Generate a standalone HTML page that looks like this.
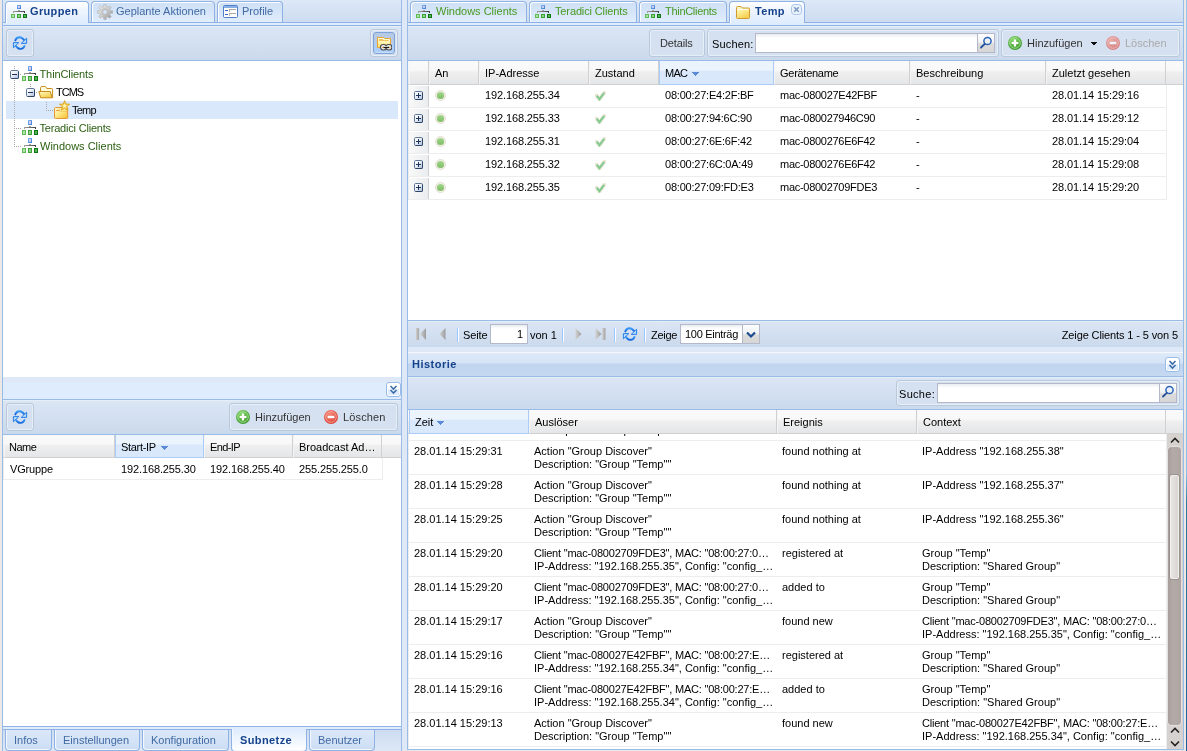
<!DOCTYPE html>
<html lang="de">
<head>
<meta charset="utf-8">
<title>ThinClient Management</title>
<style>
*{box-sizing:border-box;margin:0;padding:0}
html,body{width:1187px;height:751px;overflow:hidden}
body{background:#ebe8e5;font:11px "Liberation Sans",Arial,sans-serif;color:#000;position:relative}
.abs{position:absolute}
svg{display:block}
#edgeR{left:1186px;top:0;width:1px;height:751px;background:linear-gradient(#94c8ec 0,#86c0e8 63%,#2f7b9b 67%,#2a729a 85%,#1f5c94 100%)}
#gap{left:402px;top:0;width:5px;height:750px;background:#dfe8f6}
.panel{will-change:transform;border:1px solid #99bbe8;border-top:0;background:#fff;overflow:hidden}
#left{left:2px;top:0;width:400px;height:752px}
#right{left:407px;top:0;width:777px;height:750px}
.strip{left:0;top:0;right:0;height:23px;background:linear-gradient(#dde8f7,#cddcf1);border-bottom:1px solid #8db2e3}
.spacer{left:0;right:0;height:3px;background:#deecfd;border-bottom:1px solid #8db2e3}
.tab{position:absolute;top:1px;height:21px;border:1px solid #8db2e3;border-bottom:0;border-radius:4px 4px 0 0;background:linear-gradient(#cfe0f6 0,#d6e5f9 50%,#e0edfc 100%);color:#416aa3;white-space:nowrap;box-shadow:inset 1px 1px 0 #fff}
.tab.on{height:22px;letter-spacing:.35px;background:linear-gradient(#ffffff 0,#eef5fe 40%,#deecfd 100%);color:#15428b;font-weight:bold;box-shadow:inset 1px 1px 0 #fff}
.tab .t{position:absolute;top:3px;line-height:13px}
.tab .i{position:absolute;top:2px;left:5px;width:16px;height:16px}
.tab.g{color:#4a9a22}
.bstrip{left:0;right:0;top:730px;height:21px;background:linear-gradient(#cddcf1,#dde8f7)}
.btab{position:absolute;top:0;height:21px;border:1px solid #8db2e3;border-top:0;border-radius:0 0 4px 4px;background:linear-gradient(#dbe8f9 0,#d3e2f6 60%,#cbdcf3 100%);color:#416aa3;box-shadow:inset 1px -1px 0 #f3f8fe}
.btab.on{letter-spacing:.4px;top:-1px;height:23px;background:linear-gradient(#deecfd,#fff);color:#15428b;font-weight:bold}
.btab .t{position:absolute;top:4px;left:8px;line-height:13px;white-space:nowrap}
.btab.on .t{top:5px}
.tb{left:0;right:0;background:linear-gradient(#f1f5fb 0,#dbe6f4 1px,#d3e0f1 50%,#cad9ec 100%);border-bottom:1px solid #99bbe8}
.grp{position:absolute;border:1px solid #b9c8db;border-radius:3px;background:#d5e1f1;box-shadow:inset 0 0 0 1px #e6eef8}
.lbl{position:absolute;line-height:13px;white-space:nowrap}
.inp{position:absolute;background:#fff linear-gradient(#e9edf1 0,#fff 4px);border:1px solid #b5b8c8}
.trg{position:absolute;width:17px;background:linear-gradient(#fdfdfe 0,#f1f3f6 45%,#dcdcdc 55%,#d6d6d6 100%);border:1px solid #b5b8c8;border-left:0}
.gh{left:0;right:0;background:linear-gradient(#fafafa 0,#f8f8f8 40%,#efefef 48%,#e5e6e8 100%);border-bottom:1px solid #d0d0d0}
.hc{position:absolute;top:0;bottom:-1px;border-left:1px solid #f4f4f4;border-right:1px solid #d0d0d0;border-bottom:1px solid #d0d0d0;padding:5px 3px 0 5px;line-height:15px;white-space:nowrap;overflow:hidden}
.hc.s{background:linear-gradient(#ebf3fd 0,#ebf3fd 40%,#d9e8fb 45%,#d9e8fb 100%);border-color:#aaccf6}
.sa{display:inline-block;margin:0 0 1px 5px;vertical-align:middle}
.row{position:absolute;left:0;border:1px solid #ededed;border-top:0;background:#fff}
.c{position:absolute;top:0;line-height:13px;white-space:nowrap;overflow:hidden}
.pbtn{position:absolute;border:1px solid #7ea1d8;border-radius:3px;background:linear-gradient(#b5c9e4 0,#b7cce7 56%,#a9cdf7 57%,#aed0f7 92%,#d4e6fb 100%)}
i.n{font-style:normal;letter-spacing:-.21px}

</style>
</head>
<body>
<div class="abs" id="gap"></div>
<div class="abs" id="edgeR"></div>

<!-- LEFT PANEL -->
<div class="abs panel" id="left">
  <div class="abs strip" id="ltabs">
    <div class="tab on" style="left:2px;width:84px"><span class="i"><svg width="16" height="16" viewBox="0 0 16 16" ><defs><linearGradient id="nb28" x1="0" y1="0" x2="1" y2="1"><stop offset="0" stop-color="#86b6f0"/><stop offset="1" stop-color="#3c7ad2"/></linearGradient>
<linearGradient id="nl28" x1="0" y1="0" x2="1" y2="0"><stop offset="0" stop-color="#a2a2a2"/><stop offset="1" stop-color="#3f3f3f"/></linearGradient></defs>
<g shape-rendering="crispEdges">
<rect x="6" y="1" width="4" height="4" fill="url(#nb28)"/><rect x="7" y="2" width="2" height="2" fill="#cdcbee"/>
<rect x="7" y="6" width="2" height="1" fill="#a3a3a3"/>
<rect x="2" y="7" width="12" height="1" fill="url(#nl28)"/><rect x="2" y="8" width="1" height="1" fill="#a0a0a0"/><rect x="13" y="8" width="1" height="1" fill="#3a3a3a"/>
<rect x="0" y="10" width="4" height="4" fill="#5dbd52"/><rect x="1" y="11" width="2" height="2" fill="#b4e0ae"/>
<rect x="6" y="10" width="4" height="4" fill="#3aa432"/><rect x="7" y="11" width="2" height="2" fill="#8fd18a"/>
<rect x="12" y="10" width="4" height="4" fill="#0c7710"/><rect x="13" y="11" width="2" height="2" fill="#56b257"/>
</g></svg></span><span class="t" style="left:24px">Gruppen</span></div>
    <div class="tab" style="left:88px;width:124px"><span class="i"><svg width="16" height="16" viewBox="0 0 16 16" ><defs><linearGradient id="gg32" x1="0" y1="0" x2="1" y2="1"><stop offset="0" stop-color="#ededed"/><stop offset=".5" stop-color="#cfcfcf"/><stop offset="1" stop-color="#8d8d8d"/></linearGradient></defs>
<path d="M6.61 2.78L6.77 0.40L9.23 0.40L9.39 2.78L10.71 3.33L12.51 1.76L14.24 3.49L12.67 5.29L13.22 6.61L15.60 6.77L15.60 9.23L13.22 9.39L12.67 10.71L14.24 12.51L12.51 14.24L10.71 12.67L9.39 13.22L9.23 15.60L6.77 15.60L6.61 13.22L5.29 12.67L3.49 14.24L1.76 12.51L3.33 10.71L2.78 9.39L0.40 9.23L0.40 6.77L2.78 6.61L3.33 5.29L1.76 3.49L3.49 1.76L5.29 3.33ZM5.70 8a2.3 2.3 0 1 0 4.6 0a2.3 2.3 0 1 0 -4.6 0Z" fill="url(#gg32)" fill-rule="evenodd" stroke="#a7a7a7" stroke-width=".5" stroke-linejoin="round"/>
<circle cx="8" cy="8" r="3.300" fill="none" stroke="#b9b9b9" stroke-width=".8"/></svg></span><span class="t" style="left:24px">Geplante Aktionen</span></div>
    <div class="tab" style="left:214px;width:66px"><span class="i"><svg width="16" height="16" viewBox="0 0 16 16" ><rect x=".5" y="1.5" width="14" height="12" rx="1" fill="#fffdf8" stroke="#4f7fc7"/>
<rect x="1" y="2" width="13" height="2" fill="#86b0e6"/>
<g shape-rendering="crispEdges"><rect x="2" y="6" width="3" height="1" fill="#3b63d6"/><rect x="2" y="10" width="3" height="1" fill="#3b63d6"/>
<rect x="6" y="5" width="7" height="1" fill="#a9a9a9"/><rect x="6" y="6" width="1" height="2" fill="#b9b9b9"/>
<rect x="6" y="9" width="7" height="1" fill="#a9a9a9"/><rect x="6" y="10" width="1" height="2" fill="#b9b9b9"/></g></svg></span><span class="t" style="left:24px">Profile</span></div>
  </div>
  <div class="abs spacer" style="top:23px"></div>
  <div class="abs tb" style="top:26px;height:35px" id="ltb1">
    <div class="grp" style="left:3px;top:3px;width:28px;height:28px"><span class="abs" style="left:5px;top:5px"><svg width="16" height="16" viewBox="0 0 16 16" ><defs><linearGradient id="rg34" x1="0" y1="0" x2="0" y2="1"><stop offset="0" stop-color="#3a9cf6"/><stop offset="1" stop-color="#1668dc"/></linearGradient></defs>
<path d="M3.300 5.400C4.600 1.700 9.400.700 12.300 5.300" fill="none" stroke="url(#rg34)" stroke-width="1.900" stroke-linecap="round"/>
<path d="M14.600 3.200v5.200H9.200z" fill="#b4dbfc" stroke="#2a7fe6" stroke-width="1" stroke-linejoin="round"/>
<path d="M12.500 10.900C11.200 14.500 6.600 15.300 3.800 10.700" fill="none" stroke="url(#rg34)" stroke-width="1.900" stroke-linecap="round"/>
<path d="M1.400 12.800V7.600h5.400z" fill="#b4dbfc" stroke="#2a7fe6" stroke-width="1" stroke-linejoin="round"/></svg></span></div>
    <div class="grp" style="left:367px;top:3px;width:28px;height:28px"><div class="pbtn" style="left:2px;top:2px;width:22px;height:22px"><span class="abs" style="left:2px;top:2px"><svg width="16" height="16" viewBox="0 0 16 16" ><defs><linearGradient id="fl37" x1="0" y1="0" x2="0" y2="1"><stop offset="0" stop-color="#fffbe2"/><stop offset=".5" stop-color="#fff3b0"/><stop offset="1" stop-color="#f9d860"/></linearGradient></defs>
<path d="M1.500 12.500V2.500h6l1 1h6v9z" fill="url(#fl37)" stroke="#e8a631"/>
<path d="M3 4.500h4M3 5.500h9.500" stroke="#f3c45e"/>
<rect x="4.500" y="9.500" width="6" height="5.500" rx="2.700" fill="#ececec" stroke="#4c4c4c" stroke-width="1.100"/>
<rect x="9.900" y="9.500" width="6" height="5.500" rx="2.700" fill="#ececec" stroke="#4c4c4c" stroke-width="1.100"/>
<rect x="7.400" y="11.600" width="5.700" height="1.500" fill="#161616"/>
<rect x="7.900" y="11.200" width="4.700" height=".7" fill="#f6f6f6"/>
<rect x="6.100" y="11.800" width="1.100" height="1.100" fill="#f39a1f"/><rect x="13.300" y="11.800" width="1.100" height="1.100" fill="#f39a1f"/></svg></span></div></div>
  </div>
  <div class="abs" id="tree" style="left:0;right:0;top:61px;height:316px;background:#fff"><div class="abs" style="left:3px;top:40px;width:392px;height:18px;background:#d9e8fb"></div><svg class="abs" style="left:0;top:0" width="100" height="100" shape-rendering="crispEdges"><g stroke="#a9a9a9" stroke-dasharray="1 1" fill="none"><path d="M11.500 5v81"/><path d="M17 13.500h2"/><path d="M27.500 23v5"/><path d="M33 31.500h2"/><path d="M43.500 41v9"/><path d="M43 49.500h8"/><path d="M11 67.500h8"/><path d="M11 85.500h8"/></g></svg><span class="abs" style="left:7px;top:9px;"><svg width="9" height="9" viewBox="0 0 9 9" ><defs><linearGradient id="mb0" x1="0" y1="0" x2="1" y2="1"><stop offset="0" stop-color="#ffffff"/><stop offset=".4" stop-color="#f0f3fa"/><stop offset="1" stop-color="#a9badb"/></linearGradient></defs>
<rect x=".5" y=".5" width="8" height="8" rx="1.200" fill="url(#mb0)" stroke="#5f7594"/>
<path d="M8.500 1.500v6.300c0 .4-.3.700-.7.700H1.500" fill="none" stroke="#2f4566"/>
<g shape-rendering="crispEdges"><rect x="2" y="4" width="5" height="1" fill="#1d3557"/></g></svg></span><span class="abs" style="left:19px;top:4px;"><svg width="16" height="18" viewBox="0 0 16 16" preserveAspectRatio="none"><defs><linearGradient id="nb1" x1="0" y1="0" x2="1" y2="1"><stop offset="0" stop-color="#86b6f0"/><stop offset="1" stop-color="#3c7ad2"/></linearGradient>
<linearGradient id="nl1" x1="0" y1="0" x2="1" y2="0"><stop offset="0" stop-color="#a2a2a2"/><stop offset="1" stop-color="#3f3f3f"/></linearGradient></defs>
<g shape-rendering="crispEdges">
<rect x="6" y="1" width="4" height="4" fill="url(#nb1)"/><rect x="7" y="2" width="2" height="2" fill="#cdcbee"/>
<rect x="7" y="6" width="2" height="1" fill="#a3a3a3"/>
<rect x="2" y="7" width="12" height="1" fill="url(#nl1)"/><rect x="2" y="8" width="1" height="1" fill="#a0a0a0"/><rect x="13" y="8" width="1" height="1" fill="#3a3a3a"/>
<rect x="0" y="10" width="4" height="4" fill="#5dbd52"/><rect x="1" y="11" width="2" height="2" fill="#b4e0ae"/>
<rect x="6" y="10" width="4" height="4" fill="#3aa432"/><rect x="7" y="11" width="2" height="2" fill="#8fd18a"/>
<rect x="12" y="10" width="4" height="4" fill="#0c7710"/><rect x="13" y="11" width="2" height="2" fill="#56b257"/>
</g></svg></span><span class="abs" style="left:36.5px;top:4px;line-height:18px;white-space:nowrap;color:#2b5f12;letter-spacing:-0.1px;">ThinClients</span><span class="abs" style="left:23px;top:27px;"><svg width="9" height="9" viewBox="0 0 9 9" ><defs><linearGradient id="mb2" x1="0" y1="0" x2="1" y2="1"><stop offset="0" stop-color="#ffffff"/><stop offset=".4" stop-color="#f0f3fa"/><stop offset="1" stop-color="#a9badb"/></linearGradient></defs>
<rect x=".5" y=".5" width="8" height="8" rx="1.200" fill="url(#mb2)" stroke="#5f7594"/>
<path d="M8.500 1.500v6.300c0 .4-.3.700-.7.700H1.500" fill="none" stroke="#2f4566"/>
<g shape-rendering="crispEdges"><rect x="2" y="4" width="5" height="1" fill="#1d3557"/></g></svg></span><span class="abs" style="left:35px;top:22px;"><svg width="16" height="18" viewBox="0 0 16 18" ><defs><linearGradient id="fo3" x1="0" y1="0" x2=".6" y2="1"><stop offset="0" stop-color="#fffbc2"/><stop offset="1" stop-color="#f4cb48"/></linearGradient></defs>
<path d="M2.500 9V5.200c0-1 .6-1.700 1.500-1.700h2.800c.8 0 1.200.4 1.500 1l.5 1h5c.5 0 .8.300.8.800v8.700" fill="#fffbdc" stroke="#c48a1c"/>
<path d="M.8 8.500h11.400l2 6.300H2.700z" fill="url(#fo3)" stroke="#c48a1c" stroke-linejoin="round"/></svg></span><span class="abs" style="left:53px;top:22px;line-height:18px;white-space:nowrap;letter-spacing:-1.0px;">TCMS</span><span class="abs" style="left:51px;top:39px;"><svg width="16" height="19" viewBox="0 0 16 19" ><defs><linearGradient id="fs4" x1="0" y1="0" x2="1" y2="1"><stop offset="0" stop-color="#fff8d0"/><stop offset=".45" stop-color="#fde98a"/><stop offset="1" stop-color="#f3bd2a"/></linearGradient></defs>
<path d="M.5 17.500V8.500c0-.6.400-1 1-1h11.200c.6 0 1 .4 1 1v9c0 .6-.4 1-1 1h-11.200c-.6 0-1-.4-1-1z" fill="url(#fs4)" stroke="#e8953a"/>
<path d="M2 10.500h3.500v-1" stroke="#e2a040" fill="none"/><path d="M6 11.500h7" stroke="#f0c060" opacity=".7"/>
<path d="M10.60 0.50L11.95 4.04L15.74 4.23L12.79 6.61L13.77 10.27L10.60 8.20L7.43 10.27L8.41 6.61L5.46 4.23L9.25 4.04Z" fill="#f6cf45" stroke="#d9a01f" stroke-width=".8" stroke-linejoin="round"/>
<path d="M10.60 3.40L11.31 5.03L13.07 5.20L11.74 6.37L12.13 8.10L10.60 7.20L9.07 8.10L9.46 6.37L8.13 5.20L9.89 5.03Z" fill="#fdf3b8"/></svg></span><span class="abs" style="left:69px;top:40px;line-height:18px;white-space:nowrap;letter-spacing:-0.8px;">Temp</span><span class="abs" style="left:19px;top:58px;"><svg width="16" height="18" viewBox="0 0 16 16" preserveAspectRatio="none"><defs><linearGradient id="nb5" x1="0" y1="0" x2="1" y2="1"><stop offset="0" stop-color="#86b6f0"/><stop offset="1" stop-color="#3c7ad2"/></linearGradient>
<linearGradient id="nl5" x1="0" y1="0" x2="1" y2="0"><stop offset="0" stop-color="#a2a2a2"/><stop offset="1" stop-color="#3f3f3f"/></linearGradient></defs>
<g shape-rendering="crispEdges">
<rect x="6" y="1" width="4" height="4" fill="url(#nb5)"/><rect x="7" y="2" width="2" height="2" fill="#cdcbee"/>
<rect x="7" y="6" width="2" height="1" fill="#a3a3a3"/>
<rect x="2" y="7" width="12" height="1" fill="url(#nl5)"/><rect x="2" y="8" width="1" height="1" fill="#a0a0a0"/><rect x="13" y="8" width="1" height="1" fill="#3a3a3a"/>
<rect x="0" y="10" width="4" height="4" fill="#5dbd52"/><rect x="1" y="11" width="2" height="2" fill="#b4e0ae"/>
<rect x="6" y="10" width="4" height="4" fill="#3aa432"/><rect x="7" y="11" width="2" height="2" fill="#8fd18a"/>
<rect x="12" y="10" width="4" height="4" fill="#0c7710"/><rect x="13" y="11" width="2" height="2" fill="#56b257"/>
</g></svg></span><span class="abs" style="left:36.5px;top:58px;line-height:18px;white-space:nowrap;color:#2b5f12;letter-spacing:-0.2px;">Teradici Clients</span><span class="abs" style="left:19px;top:76px;"><svg width="16" height="18" viewBox="0 0 16 16" preserveAspectRatio="none"><defs><linearGradient id="nb6" x1="0" y1="0" x2="1" y2="1"><stop offset="0" stop-color="#86b6f0"/><stop offset="1" stop-color="#3c7ad2"/></linearGradient>
<linearGradient id="nl6" x1="0" y1="0" x2="1" y2="0"><stop offset="0" stop-color="#a2a2a2"/><stop offset="1" stop-color="#3f3f3f"/></linearGradient></defs>
<g shape-rendering="crispEdges">
<rect x="6" y="1" width="4" height="4" fill="url(#nb6)"/><rect x="7" y="2" width="2" height="2" fill="#cdcbee"/>
<rect x="7" y="6" width="2" height="1" fill="#a3a3a3"/>
<rect x="2" y="7" width="12" height="1" fill="url(#nl6)"/><rect x="2" y="8" width="1" height="1" fill="#a0a0a0"/><rect x="13" y="8" width="1" height="1" fill="#3a3a3a"/>
<rect x="0" y="10" width="4" height="4" fill="#5dbd52"/><rect x="1" y="11" width="2" height="2" fill="#b4e0ae"/>
<rect x="6" y="10" width="4" height="4" fill="#3aa432"/><rect x="7" y="11" width="2" height="2" fill="#8fd18a"/>
<rect x="12" y="10" width="4" height="4" fill="#0c7710"/><rect x="13" y="11" width="2" height="2" fill="#56b257"/>
</g></svg></span><span class="abs" style="left:37px;top:76px;line-height:18px;white-space:nowrap;color:#2b5f12;">Windows Clients</span></div>
  <div class="abs" style="left:0;right:0;top:377px;height:5px;background:#dfe8f6"></div>
  <div class="abs" style="left:0;right:0;top:382px;height:18px;background:#dfecfd;border-bottom:1px solid #99bbe8" id="lmini"><span class="abs" style="left:383px;top:0"><svg width="15" height="15" viewBox="0 0 15 15" ><rect x=".5" y=".5" width="14" height="14" rx="2.500" fill="#fff" stroke="#99bbe8"/>
<rect x="2" y="7" width="11" height="6" fill="#deecfd"/>
<path d="M4.500 4l3 3 3-3M4.500 8l3 3 3-3" fill="none" stroke="#3f6fa8" stroke-width="1.600"/></svg></span></div>
  <div class="abs tb" style="top:400px;height:35px" id="ltb2">
    <div class="grp" style="left:3px;top:3px;width:28px;height:28px"><span class="abs" style="left:5px;top:5px"><svg width="16" height="16" viewBox="0 0 16 16" ><defs><linearGradient id="rg35" x1="0" y1="0" x2="0" y2="1"><stop offset="0" stop-color="#3a9cf6"/><stop offset="1" stop-color="#1668dc"/></linearGradient></defs>
<path d="M3.300 5.400C4.600 1.700 9.400.700 12.300 5.300" fill="none" stroke="url(#rg35)" stroke-width="1.900" stroke-linecap="round"/>
<path d="M14.600 3.200v5.200H9.200z" fill="#b4dbfc" stroke="#2a7fe6" stroke-width="1" stroke-linejoin="round"/>
<path d="M12.500 10.900C11.200 14.500 6.600 15.300 3.800 10.700" fill="none" stroke="url(#rg35)" stroke-width="1.900" stroke-linecap="round"/>
<path d="M1.400 12.800V7.600h5.400z" fill="#b4dbfc" stroke="#2a7fe6" stroke-width="1" stroke-linejoin="round"/></svg></span></div>
    <div class="grp" style="left:226px;top:3px;width:169px;height:28px">
      <span class="abs" style="left:5px;top:5px"><svg width="16" height="16" viewBox="0 0 16 16" ><defs><radialGradient id="ag38" cx=".4" cy=".3" r=".8"><stop offset="0" stop-color="#8ad96e"/><stop offset="1" stop-color="#2f8f22"/></radialGradient></defs>
<circle cx="8" cy="8" r="7" fill="url(#ag38)"/><circle cx="8" cy="8" r="5.300" fill="none" stroke="#b6e6a4" stroke-width=".9" opacity=".8"/>
<path d="M8 4.600v6.800M4.600 8h6.800" stroke="#fff" stroke-width="2.200"/></svg></span>
      <span class="lbl" style="left:25px;top:7px;color:#333">Hinzufügen</span>
      <span class="abs" style="left:93px;top:5px"><svg width="16" height="16" viewBox="0 0 16 16" ><defs><radialGradient id="dg40" cx=".4" cy=".3" r=".8"><stop offset="0" stop-color="#f58a7a"/><stop offset="1" stop-color="#d8352a"/></radialGradient></defs>
<circle cx="8" cy="8" r="7" fill="url(#dg40)"/><circle cx="8" cy="8" r="5.300" fill="none" stroke="#f8b9ae" stroke-width=".9" opacity=".8"/>
<path d="M4.600 8h6.800" stroke="#fff" stroke-width="2.400"/></svg></span>
      <span class="lbl" style="left:113px;top:7px;color:#333;letter-spacing:.15px">Löschen</span>
    </div>
  </div>
  <div class="abs gh" style="top:435px;height:23px" id="lgh">
    <div class="hc" style="left:1px;width:111px;padding-left:4px;letter-spacing:-.5px">Name</div>
    <div class="hc s" style="left:112px;width:89px"><span style="letter-spacing:-.3px">Start-IP</span><svg class="sa" width="7" height="4" shape-rendering="crispEdges"><path d="M0 0h7v1H0zM1 1h5v1H1zM2 2h3v1H2zM3 3h1v1H3z" fill="#5b8bd6"/></svg></div>
    <div class="hc" style="left:201px;width:89px;letter-spacing:-.6px">End-IP</div>
    <div class="hc" style="left:290px;width:89px">Broadcast Ad…</div>
  </div>
  <div class="row" style="top:458px;width:380px;height:22px">
    <span class="c" style="left:6px;top:5px;letter-spacing:-.15px">VGruppe</span>
    <span class="c" style="left:117px;top:5px;letter-spacing:-.12px">192.168.255.30</span>
    <span class="c" style="left:206px;top:5px;letter-spacing:-.12px">192.168.255.40</span>
    <span class="c" style="left:295px;top:5px;letter-spacing:-.12px">255.255.255.0</span>
  </div>
  <div class="abs" style="left:0;right:0;top:726px;height:1px;background:#8db2e3"></div>
  <div class="abs" style="left:0;right:0;top:727px;height:2px;background:#deecfd"></div>
  <div class="abs" style="left:0;right:0;top:729px;height:1px;background:#8db2e3"></div>
  <div class="abs bstrip" id="lbt">
    <div class="btab" style="left:2px;width:47px"><span class="t">Infos</span></div>
    <div class="btab" style="left:51px;width:86px"><span class="t">Einstellungen</span></div>
    <div class="btab" style="left:139px;width:87px"><span class="t">Konfiguration</span></div>
    <div class="btab on" style="left:228px;width:76px"><span class="t">Subnetze</span></div>
    <div class="btab" style="left:306px;width:66px"><span class="t">Benutzer</span></div>
  </div>
</div>

<!-- RIGHT PANEL -->
<div class="abs panel" id="right">
  <div class="abs strip" id="rtabs">
    <div class="tab g" style="left:2px;width:117px"><span class="i"><svg width="16" height="16" viewBox="0 0 16 16" ><defs><linearGradient id="nb29" x1="0" y1="0" x2="1" y2="1"><stop offset="0" stop-color="#86b6f0"/><stop offset="1" stop-color="#3c7ad2"/></linearGradient>
<linearGradient id="nl29" x1="0" y1="0" x2="1" y2="0"><stop offset="0" stop-color="#a2a2a2"/><stop offset="1" stop-color="#3f3f3f"/></linearGradient></defs>
<g shape-rendering="crispEdges">
<rect x="6" y="1" width="4" height="4" fill="url(#nb29)"/><rect x="7" y="2" width="2" height="2" fill="#cdcbee"/>
<rect x="7" y="6" width="2" height="1" fill="#a3a3a3"/>
<rect x="2" y="7" width="12" height="1" fill="url(#nl29)"/><rect x="2" y="8" width="1" height="1" fill="#a0a0a0"/><rect x="13" y="8" width="1" height="1" fill="#3a3a3a"/>
<rect x="0" y="10" width="4" height="4" fill="#5dbd52"/><rect x="1" y="11" width="2" height="2" fill="#b4e0ae"/>
<rect x="6" y="10" width="4" height="4" fill="#3aa432"/><rect x="7" y="11" width="2" height="2" fill="#8fd18a"/>
<rect x="12" y="10" width="4" height="4" fill="#0c7710"/><rect x="13" y="11" width="2" height="2" fill="#56b257"/>
</g></svg></span><span class="t" style="left:25px">Windows Clients</span></div>
    <div class="tab g" style="left:121px;width:108px"><span class="i"><svg width="16" height="16" viewBox="0 0 16 16" ><defs><linearGradient id="nb30" x1="0" y1="0" x2="1" y2="1"><stop offset="0" stop-color="#86b6f0"/><stop offset="1" stop-color="#3c7ad2"/></linearGradient>
<linearGradient id="nl30" x1="0" y1="0" x2="1" y2="0"><stop offset="0" stop-color="#a2a2a2"/><stop offset="1" stop-color="#3f3f3f"/></linearGradient></defs>
<g shape-rendering="crispEdges">
<rect x="6" y="1" width="4" height="4" fill="url(#nb30)"/><rect x="7" y="2" width="2" height="2" fill="#cdcbee"/>
<rect x="7" y="6" width="2" height="1" fill="#a3a3a3"/>
<rect x="2" y="7" width="12" height="1" fill="url(#nl30)"/><rect x="2" y="8" width="1" height="1" fill="#a0a0a0"/><rect x="13" y="8" width="1" height="1" fill="#3a3a3a"/>
<rect x="0" y="10" width="4" height="4" fill="#5dbd52"/><rect x="1" y="11" width="2" height="2" fill="#b4e0ae"/>
<rect x="6" y="10" width="4" height="4" fill="#3aa432"/><rect x="7" y="11" width="2" height="2" fill="#8fd18a"/>
<rect x="12" y="10" width="4" height="4" fill="#0c7710"/><rect x="13" y="11" width="2" height="2" fill="#56b257"/>
</g></svg></span><span class="t" style="left:25px;letter-spacing:-.13px">Teradici Clients</span></div>
    <div class="tab g" style="left:231px;width:88px"><span class="i"><svg width="16" height="16" viewBox="0 0 16 16" ><defs><linearGradient id="nb31" x1="0" y1="0" x2="1" y2="1"><stop offset="0" stop-color="#86b6f0"/><stop offset="1" stop-color="#3c7ad2"/></linearGradient>
<linearGradient id="nl31" x1="0" y1="0" x2="1" y2="0"><stop offset="0" stop-color="#a2a2a2"/><stop offset="1" stop-color="#3f3f3f"/></linearGradient></defs>
<g shape-rendering="crispEdges">
<rect x="6" y="1" width="4" height="4" fill="url(#nb31)"/><rect x="7" y="2" width="2" height="2" fill="#cdcbee"/>
<rect x="7" y="6" width="2" height="1" fill="#a3a3a3"/>
<rect x="2" y="7" width="12" height="1" fill="url(#nl31)"/><rect x="2" y="8" width="1" height="1" fill="#a0a0a0"/><rect x="13" y="8" width="1" height="1" fill="#3a3a3a"/>
<rect x="0" y="10" width="4" height="4" fill="#5dbd52"/><rect x="1" y="11" width="2" height="2" fill="#b4e0ae"/>
<rect x="6" y="10" width="4" height="4" fill="#3aa432"/><rect x="7" y="11" width="2" height="2" fill="#8fd18a"/>
<rect x="12" y="10" width="4" height="4" fill="#0c7710"/><rect x="13" y="11" width="2" height="2" fill="#56b257"/>
</g></svg></span><span class="t" style="left:25px;letter-spacing:-.3px">ThinClients</span></div>
    <div class="tab on" style="left:321px;width:76px"><span class="i"><svg width="16" height="16" viewBox="0 0 16 16" ><defs><linearGradient id="fc36" x1="0" y1="0" x2=".5" y2="1"><stop offset="0" stop-color="#fffbd4"/><stop offset=".5" stop-color="#fdec92"/><stop offset="1" stop-color="#f7d052"/></linearGradient></defs>
<path d="M1.500 13.500V3.500c0-.6.400-1 1-1h3.500l1.300 1.500h6.200c.6 0 1 .4 1 1v8.500c0 .6-.4 1-1 1h-11c-.6 0-1-.4-1-1z" fill="url(#fc36)" stroke="#d19a30"/>
<path d="M2.500 5.500h11" stroke="#fffdf0"/></svg></span><span class="t" style="left:25px">Temp</span><span class="abs" style="left:61px;top:2px"><svg width="11" height="11" viewBox="0 0 11 11" ><rect x=".5" y=".5" width="10" height="10" rx="3" fill="#eaf2fc" stroke="#a9c2e6"/>
<path d="M3.200 3.200l4.600 4.600M7.800 3.200l-4.600 4.600" stroke="#7e9bc6" stroke-width="1.600"/></svg></span></div>
  </div>
  <div class="abs spacer" style="top:23px"></div>
  <div class="abs tb" style="top:26px;height:35px" id="rtb1">
    <div class="grp" style="left:241px;top:3px;width:56px;height:28px"><span class="lbl" style="left:10px;top:7px;color:#333;letter-spacing:-.15px">Details</span></div>
    <div class="grp" style="left:299px;top:3px;width:292px;height:28px">
      <span class="lbl" style="left:4px;top:8px;letter-spacing:.15px">Suchen:</span>
      <div class="inp" style="left:47px;top:3px;width:223px;height:20px"></div>
      <div class="trg" style="left:270px;top:3px;height:20px"><span class="abs" style="left:0;top:1px"><svg width="16" height="16" viewBox="0 0 16 16" ><circle cx="9.500" cy="6" r="3.600" fill="#e9eef5" fill-opacity=".7" stroke="#2b64b8" stroke-width="1.500"/>
<path d="M6.800 8.800L3 12.500" stroke="#23509a" stroke-width="1.800" stroke-linecap="round"/></svg></span></div>
    </div>
    <div class="grp" style="left:593px;top:3px;width:179px;height:28px">
      <span class="abs" style="left:5px;top:5px"><svg width="16" height="16" viewBox="0 0 16 16" ><defs><radialGradient id="ag39" cx=".4" cy=".3" r=".8"><stop offset="0" stop-color="#8ad96e"/><stop offset="1" stop-color="#2f8f22"/></radialGradient></defs>
<circle cx="8" cy="8" r="7" fill="url(#ag39)"/><circle cx="8" cy="8" r="5.300" fill="none" stroke="#b6e6a4" stroke-width=".9" opacity=".8"/>
<path d="M8 4.600v6.800M4.600 8h6.800" stroke="#fff" stroke-width="2.200"/></svg></span>
      <span class="lbl" style="left:25px;top:7px;color:#333">Hinzufügen</span>
      <svg class="abs" style="left:89px;top:12px" width="6" height="3" shape-rendering="crispEdges"><path d="M0 0h6v1H0zM1 1h4v1H1zM2 2h2v1H2z" fill="#111"/></svg>
      <span class="abs" style="left:103px;top:5px;opacity:.6"><svg width="16" height="16" viewBox="0 0 16 16" ><defs><radialGradient id="dg41" cx=".4" cy=".3" r=".8"><stop offset="0" stop-color="#f58a7a"/><stop offset="1" stop-color="#d8352a"/></radialGradient></defs>
<circle cx="8" cy="8" r="7" fill="url(#dg41)"/><circle cx="8" cy="8" r="5.300" fill="none" stroke="#f8b9ae" stroke-width=".9" opacity=".8"/>
<path d="M4.600 8h6.800" stroke="#fff" stroke-width="2.400"/></svg></span>
      <span class="lbl" style="left:123px;top:7px;color:#aaa">Löschen</span>
    </div>
  </div>
  <div class="abs gh" style="top:61px;height:24px" id="rgh1">
    <div class="hc" style="left:1px;width:20px"></div>
    <div class="hc" style="left:21px;width:50px">An</div>
    <div class="hc" style="left:71px;width:110px">IP-Adresse</div>
    <div class="hc" style="left:181px;width:70px">Zustand</div>
    <div class="hc s" style="left:251px;width:115px"><span style="letter-spacing:-.7px">MAC</span><svg class="sa" width="7" height="4" shape-rendering="crispEdges"><path d="M0 0h7v1H0zM1 1h5v1H1zM2 2h3v1H2zM3 3h1v1H3z" fill="#5b8bd6"/></svg></div>
    <div class="hc" style="left:366px;width:136px;letter-spacing:-.27px">Gerätename</div>
    <div class="hc" style="left:502px;width:136px">Beschreibung</div>
    <div class="hc" style="left:638px;width:120px">Zuletzt gesehen</div>
  </div>
  <div id="rows1"><div class="row" style="top:85px;width:759px;height:23px"><div class="abs" style="left:0;top:1px;width:20px;height:21px;background:linear-gradient(90deg,#f9f9f9,#ebecee);border-right:1px solid #d0d0d0"></div><span class="abs" style="left:5px;top:6px;"><svg width="9" height="9" viewBox="0 0 9 9" ><defs><linearGradient id="mb7" x1="0" y1="0" x2="1" y2="1"><stop offset="0" stop-color="#ffffff"/><stop offset=".4" stop-color="#f0f3fa"/><stop offset="1" stop-color="#a9badb"/></linearGradient></defs>
<rect x=".5" y=".5" width="8" height="8" rx="1.200" fill="url(#mb7)" stroke="#5f7594"/>
<path d="M8.500 1.500v6.300c0 .4-.3.700-.7.700H1.500" fill="none" stroke="#2f4566"/>
<g shape-rendering="crispEdges"><rect x="2" y="4" width="5" height="1" fill="#1d3557"/><rect x="4" y="2" width="1" height="5" fill="#1d3557"/></g></svg></span><span class="abs" style="left:26px;top:5px;"><svg width="11" height="11" viewBox="0 0 11 11" ><circle cx="5.500" cy="5.500" r="5" fill="#f4f1ea" stroke="#e3decf"/>
<defs><linearGradient id="lg8" x1="0" y1="0" x2="0" y2="1"><stop offset="0" stop-color="#a2d78b"/><stop offset="1" stop-color="#7cbc66"/></linearGradient></defs>
<circle cx="5.500" cy="5.500" r="3.600" fill="url(#lg8)"/></svg></span><span class="c" style="left:76px;top:4px;letter-spacing:-.12px">192.168.255.34</span><span class="abs" style="left:186px;top:6px;"><svg width="11" height="10" viewBox="0 0 11 10" ><path d="M1.500 4.500l2.800 4L9.500 1.500" fill="none" stroke="#ece7d8" stroke-width="3.800" stroke-linejoin="round" stroke-linecap="round"/>
<path d="M1.800 4.600l2.600 3.600L9.200 1.800" fill="none" stroke="#82cb90" stroke-width="2" stroke-linejoin="miter"/></svg></span><span class="c" style="left:256px;top:4px;letter-spacing:-.22px">08:00:27:E4:2F:BF</span><span class="c" style="left:371px;top:4px;letter-spacing:-.28px">mac-080027E42FBF</span><span class="c" style="left:507px;top:4px">-</span><span class="c" style="left:643px;top:4px;letter-spacing:-.1px">28.01.14 15:29:16</span></div><div class="row" style="top:108px;width:759px;height:23px"><div class="abs" style="left:0;top:1px;width:20px;height:21px;background:linear-gradient(90deg,#f9f9f9,#ebecee);border-right:1px solid #d0d0d0"></div><span class="abs" style="left:5px;top:6px;"><svg width="9" height="9" viewBox="0 0 9 9" ><defs><linearGradient id="mb10" x1="0" y1="0" x2="1" y2="1"><stop offset="0" stop-color="#ffffff"/><stop offset=".4" stop-color="#f0f3fa"/><stop offset="1" stop-color="#a9badb"/></linearGradient></defs>
<rect x=".5" y=".5" width="8" height="8" rx="1.200" fill="url(#mb10)" stroke="#5f7594"/>
<path d="M8.500 1.500v6.300c0 .4-.3.700-.7.700H1.500" fill="none" stroke="#2f4566"/>
<g shape-rendering="crispEdges"><rect x="2" y="4" width="5" height="1" fill="#1d3557"/><rect x="4" y="2" width="1" height="5" fill="#1d3557"/></g></svg></span><span class="abs" style="left:26px;top:5px;"><svg width="11" height="11" viewBox="0 0 11 11" ><circle cx="5.500" cy="5.500" r="5" fill="#f4f1ea" stroke="#e3decf"/>
<defs><linearGradient id="lg11" x1="0" y1="0" x2="0" y2="1"><stop offset="0" stop-color="#a2d78b"/><stop offset="1" stop-color="#7cbc66"/></linearGradient></defs>
<circle cx="5.500" cy="5.500" r="3.600" fill="url(#lg11)"/></svg></span><span class="c" style="left:76px;top:4px;letter-spacing:-.12px">192.168.255.33</span><span class="abs" style="left:186px;top:6px;"><svg width="11" height="10" viewBox="0 0 11 10" ><path d="M1.500 4.500l2.800 4L9.500 1.500" fill="none" stroke="#ece7d8" stroke-width="3.800" stroke-linejoin="round" stroke-linecap="round"/>
<path d="M1.800 4.600l2.600 3.600L9.200 1.800" fill="none" stroke="#82cb90" stroke-width="2" stroke-linejoin="miter"/></svg></span><span class="c" style="left:256px;top:4px;letter-spacing:-.22px">08:00:27:94:6C:90</span><span class="c" style="left:371px;top:4px;letter-spacing:-.28px">mac-080027946C90</span><span class="c" style="left:507px;top:4px">-</span><span class="c" style="left:643px;top:4px;letter-spacing:-.1px">28.01.14 15:29:12</span></div><div class="row" style="top:131px;width:759px;height:23px"><div class="abs" style="left:0;top:1px;width:20px;height:21px;background:linear-gradient(90deg,#f9f9f9,#ebecee);border-right:1px solid #d0d0d0"></div><span class="abs" style="left:5px;top:6px;"><svg width="9" height="9" viewBox="0 0 9 9" ><defs><linearGradient id="mb13" x1="0" y1="0" x2="1" y2="1"><stop offset="0" stop-color="#ffffff"/><stop offset=".4" stop-color="#f0f3fa"/><stop offset="1" stop-color="#a9badb"/></linearGradient></defs>
<rect x=".5" y=".5" width="8" height="8" rx="1.200" fill="url(#mb13)" stroke="#5f7594"/>
<path d="M8.500 1.500v6.300c0 .4-.3.700-.7.700H1.500" fill="none" stroke="#2f4566"/>
<g shape-rendering="crispEdges"><rect x="2" y="4" width="5" height="1" fill="#1d3557"/><rect x="4" y="2" width="1" height="5" fill="#1d3557"/></g></svg></span><span class="abs" style="left:26px;top:5px;"><svg width="11" height="11" viewBox="0 0 11 11" ><circle cx="5.500" cy="5.500" r="5" fill="#f4f1ea" stroke="#e3decf"/>
<defs><linearGradient id="lg14" x1="0" y1="0" x2="0" y2="1"><stop offset="0" stop-color="#a2d78b"/><stop offset="1" stop-color="#7cbc66"/></linearGradient></defs>
<circle cx="5.500" cy="5.500" r="3.600" fill="url(#lg14)"/></svg></span><span class="c" style="left:76px;top:4px;letter-spacing:-.12px">192.168.255.31</span><span class="abs" style="left:186px;top:6px;"><svg width="11" height="10" viewBox="0 0 11 10" ><path d="M1.500 4.500l2.800 4L9.500 1.500" fill="none" stroke="#ece7d8" stroke-width="3.800" stroke-linejoin="round" stroke-linecap="round"/>
<path d="M1.800 4.600l2.600 3.600L9.200 1.800" fill="none" stroke="#82cb90" stroke-width="2" stroke-linejoin="miter"/></svg></span><span class="c" style="left:256px;top:4px;letter-spacing:-.22px">08:00:27:6E:6F:42</span><span class="c" style="left:371px;top:4px;letter-spacing:-.28px">mac-0800276E6F42</span><span class="c" style="left:507px;top:4px">-</span><span class="c" style="left:643px;top:4px;letter-spacing:-.1px">28.01.14 15:29:04</span></div><div class="row" style="top:154px;width:759px;height:23px"><div class="abs" style="left:0;top:1px;width:20px;height:21px;background:linear-gradient(90deg,#f9f9f9,#ebecee);border-right:1px solid #d0d0d0"></div><span class="abs" style="left:5px;top:6px;"><svg width="9" height="9" viewBox="0 0 9 9" ><defs><linearGradient id="mb16" x1="0" y1="0" x2="1" y2="1"><stop offset="0" stop-color="#ffffff"/><stop offset=".4" stop-color="#f0f3fa"/><stop offset="1" stop-color="#a9badb"/></linearGradient></defs>
<rect x=".5" y=".5" width="8" height="8" rx="1.200" fill="url(#mb16)" stroke="#5f7594"/>
<path d="M8.500 1.500v6.300c0 .4-.3.700-.7.700H1.500" fill="none" stroke="#2f4566"/>
<g shape-rendering="crispEdges"><rect x="2" y="4" width="5" height="1" fill="#1d3557"/><rect x="4" y="2" width="1" height="5" fill="#1d3557"/></g></svg></span><span class="abs" style="left:26px;top:5px;"><svg width="11" height="11" viewBox="0 0 11 11" ><circle cx="5.500" cy="5.500" r="5" fill="#f4f1ea" stroke="#e3decf"/>
<defs><linearGradient id="lg17" x1="0" y1="0" x2="0" y2="1"><stop offset="0" stop-color="#a2d78b"/><stop offset="1" stop-color="#7cbc66"/></linearGradient></defs>
<circle cx="5.500" cy="5.500" r="3.600" fill="url(#lg17)"/></svg></span><span class="c" style="left:76px;top:4px;letter-spacing:-.12px">192.168.255.32</span><span class="abs" style="left:186px;top:6px;"><svg width="11" height="10" viewBox="0 0 11 10" ><path d="M1.500 4.500l2.800 4L9.500 1.500" fill="none" stroke="#ece7d8" stroke-width="3.800" stroke-linejoin="round" stroke-linecap="round"/>
<path d="M1.800 4.600l2.600 3.600L9.200 1.800" fill="none" stroke="#82cb90" stroke-width="2" stroke-linejoin="miter"/></svg></span><span class="c" style="left:256px;top:4px;letter-spacing:-.22px">08:00:27:6C:0A:49</span><span class="c" style="left:371px;top:4px;letter-spacing:-.28px">mac-0800276E6F42</span><span class="c" style="left:507px;top:4px">-</span><span class="c" style="left:643px;top:4px;letter-spacing:-.1px">28.01.14 15:29:08</span></div><div class="row" style="top:177px;width:759px;height:23px"><div class="abs" style="left:0;top:1px;width:20px;height:21px;background:linear-gradient(90deg,#f9f9f9,#ebecee);border-right:1px solid #d0d0d0"></div><span class="abs" style="left:5px;top:6px;"><svg width="9" height="9" viewBox="0 0 9 9" ><defs><linearGradient id="mb19" x1="0" y1="0" x2="1" y2="1"><stop offset="0" stop-color="#ffffff"/><stop offset=".4" stop-color="#f0f3fa"/><stop offset="1" stop-color="#a9badb"/></linearGradient></defs>
<rect x=".5" y=".5" width="8" height="8" rx="1.200" fill="url(#mb19)" stroke="#5f7594"/>
<path d="M8.500 1.500v6.300c0 .4-.3.700-.7.700H1.500" fill="none" stroke="#2f4566"/>
<g shape-rendering="crispEdges"><rect x="2" y="4" width="5" height="1" fill="#1d3557"/><rect x="4" y="2" width="1" height="5" fill="#1d3557"/></g></svg></span><span class="abs" style="left:26px;top:5px;"><svg width="11" height="11" viewBox="0 0 11 11" ><circle cx="5.500" cy="5.500" r="5" fill="#f4f1ea" stroke="#e3decf"/>
<defs><linearGradient id="lg20" x1="0" y1="0" x2="0" y2="1"><stop offset="0" stop-color="#a2d78b"/><stop offset="1" stop-color="#7cbc66"/></linearGradient></defs>
<circle cx="5.500" cy="5.500" r="3.600" fill="url(#lg20)"/></svg></span><span class="c" style="left:76px;top:4px;letter-spacing:-.12px">192.168.255.35</span><span class="abs" style="left:186px;top:6px;"><svg width="11" height="10" viewBox="0 0 11 10" ><path d="M1.500 4.500l2.800 4L9.500 1.500" fill="none" stroke="#ece7d8" stroke-width="3.800" stroke-linejoin="round" stroke-linecap="round"/>
<path d="M1.800 4.600l2.600 3.600L9.200 1.800" fill="none" stroke="#82cb90" stroke-width="2" stroke-linejoin="miter"/></svg></span><span class="c" style="left:256px;top:4px;letter-spacing:-.22px">08:00:27:09:FD:E3</span><span class="c" style="left:371px;top:4px;letter-spacing:-.28px">mac-08002709FDE3</span><span class="c" style="left:507px;top:4px">-</span><span class="c" style="left:643px;top:4px;letter-spacing:-.1px">28.01.14 15:29:20</span></div></div>
  <div class="abs tb" style="top:320px;height:27px;border-top:1px solid #99bbe8;border-bottom:0" id="pg"><span class="abs" style="left:8px;top:7px;"><svg width="11" height="12" viewBox="0 0 11 12" ><defs><linearGradient id="pgr22" x1="0" y1="0" x2="1" y2="0"><stop offset="0" stop-color="#d2d2d2"/><stop offset="1" stop-color="#9c9c9c"/></linearGradient></defs><rect x="0" y="0" width="3" height="12" fill="url(#pgr22)" stroke="#c6c6c6" stroke-width=".5"/><path d="M10 0v12L4 6z" fill="url(#pgr22)"/></svg></span><span class="abs" style="left:31px;top:7px;"><svg width="7" height="12" viewBox="0 0 7 12" ><defs><linearGradient id="pgr23" x1="0" y1="0" x2="1" y2="0"><stop offset="0" stop-color="#d2d2d2"/><stop offset="1" stop-color="#9c9c9c"/></linearGradient></defs><path d="M6.500 0v12L.5 6z" fill="url(#pgr23)"/></svg></span><span class="abs" style="left:49px;top:7px;width:2px;height:14px;border-left:1px solid #98c8ff;border-right:1px solid #fff"></span><span class="lbl" style="left:55px;top:8px;letter-spacing:-.1px">Seite</span><div class="inp" style="left:82px;top:3px;width:38px;height:20px;text-align:right;padding:3px 4px 0 0;line-height:13px">1</div><span class="lbl" style="left:122px;top:8px">von 1</span><span class="abs" style="left:154px;top:7px;width:2px;height:14px;border-left:1px solid #98c8ff;border-right:1px solid #fff"></span><span class="abs" style="left:167px;top:7px;"><svg width="7" height="12" viewBox="0 0 7 12" ><defs><linearGradient id="pgr24" x1="0" y1="0" x2="1" y2="0"><stop offset="0" stop-color="#d2d2d2"/><stop offset="1" stop-color="#9c9c9c"/></linearGradient></defs><path d="M.5 0v12l6-6z" fill="url(#pgr24)"/></svg></span><span class="abs" style="left:187px;top:7px;"><svg width="11" height="12" viewBox="0 0 11 12" ><defs><linearGradient id="pgr25" x1="0" y1="0" x2="1" y2="0"><stop offset="0" stop-color="#d2d2d2"/><stop offset="1" stop-color="#9c9c9c"/></linearGradient></defs><rect x="7.500" y="0" width="3" height="12" fill="url(#pgr25)" stroke="#c6c6c6" stroke-width=".5"/><path d="M.5 0v12l6-6z" fill="url(#pgr25)"/></svg></span><span class="abs" style="left:206px;top:7px;width:2px;height:14px;border-left:1px solid #98c8ff;border-right:1px solid #fff"></span><span class="abs" style="left:214px;top:5px;"><svg width="16" height="16" viewBox="0 0 16 16" ><defs><linearGradient id="rg26" x1="0" y1="0" x2="0" y2="1"><stop offset="0" stop-color="#3a9cf6"/><stop offset="1" stop-color="#1668dc"/></linearGradient></defs>
<path d="M3.300 5.400C4.600 1.700 9.400.700 12.300 5.300" fill="none" stroke="url(#rg26)" stroke-width="1.900" stroke-linecap="round"/>
<path d="M14.600 3.200v5.200H9.200z" fill="#b4dbfc" stroke="#2a7fe6" stroke-width="1" stroke-linejoin="round"/>
<path d="M12.500 10.900C11.200 14.500 6.600 15.300 3.800 10.700" fill="none" stroke="url(#rg26)" stroke-width="1.900" stroke-linecap="round"/>
<path d="M1.400 12.800V7.600h5.400z" fill="#b4dbfc" stroke="#2a7fe6" stroke-width="1" stroke-linejoin="round"/></svg></span><span class="abs" style="left:236px;top:7px;width:2px;height:14px;border-left:1px solid #98c8ff;border-right:1px solid #fff"></span><span class="lbl" style="left:243px;top:8px;letter-spacing:-.3px">Zeige</span><div class="inp" style="left:272px;top:3px;width:63px;height:20px;padding:3px 0 0 4px;line-height:13px;white-space:nowrap;overflow:hidden;letter-spacing:-.3px">100 Einträg</div><div class="trg" style="left:335px;top:3px;height:20px"><span class="abs" style="left:3px;top:6px;"><svg width="10" height="8" viewBox="0 0 10 8" ><path d="M1 1.500l4 4 4-4" fill="none" stroke="#1d4b8f" stroke-width="2.200"/></svg></span></div><span class="lbl" style="right:5px;top:8px;letter-spacing:-.12px">Zeige Clients 1 - 5 von 5</span></div>
  <div class="abs" style="left:0;right:0;top:347px;height:5px;background:#dfe8f6"></div>
  <div class="abs" id="hhead" style="left:0;right:0;top:352px;height:25px;border-top:1px solid #f4f8fd;border-bottom:1px solid #99bbe8;background:linear-gradient(#deeaf9 0,#d5e3f6 10px,#bfd4ef 11px,#c6d9f1 100%)">
    <span class="lbl" style="left:4px;top:5px;font-weight:bold;color:#15428b;letter-spacing:.5px">Historie</span>
    <span class="abs" style="left:757px;top:4px"><svg width="15" height="15" viewBox="0 0 15 15" ><rect x=".5" y=".5" width="14" height="14" rx="2.500" fill="#fff" stroke="#99bbe8"/>
<rect x="2" y="7" width="11" height="6" fill="#deecfd"/>
<path d="M4.500 4l3 3 3-3M4.500 8l3 3 3-3" fill="none" stroke="#3f6fa8" stroke-width="1.600"/></svg></span>
  </div>
  <div class="abs tb" style="top:377px;height:33px" id="rtb2">
    <div class="grp" style="left:488px;top:3px;width:284px;height:26px">
      <span class="lbl" style="left:2px;top:7px;letter-spacing:.3px">Suche:</span>
      <div class="inp" style="left:40px;top:2px;width:223px;height:20px"></div>
      <div class="trg" style="left:263px;top:2px;height:20px"><span class="abs" style="left:0;top:0"><svg width="16" height="16" viewBox="0 0 16 16" ><circle cx="9.500" cy="6" r="3.600" fill="#e9eef5" fill-opacity=".7" stroke="#2b64b8" stroke-width="1.500"/>
<path d="M6.800 8.800L3 12.500" stroke="#23509a" stroke-width="1.800" stroke-linecap="round"/></svg></span></div>
    </div>
  </div>
  <div class="abs" id="hbody" style="left:0;top:434px;width:759px;height:315px;overflow:hidden"><div class="row" style="top:-27px;width:759px;height:34px"><span class="c" style="left:5px;top:4px">28.01.14 15:29:34</span><span class="c" style="left:125px;top:4px;width:241px">Action "Group Discover"<br>Description: "Group "Temp""</span><span class="c" style="left:373px;top:4px">found nothing at</span><span class="c" style="left:513px;top:4px;width:242px">IP-Address "192.168.255.39"</span></div><div class="row" style="top:7px;width:759px;height:34px"><span class="c" style="left:5px;top:4px">28.01.14 15:29:31</span><span class="c" style="left:125px;top:4px;width:241px">Action "Group Discover"<br>Description: "Group "Temp""</span><span class="c" style="left:373px;top:4px">found nothing at</span><span class="c" style="left:513px;top:4px;width:242px">IP-Address "192.168.255.38"</span></div><div class="row" style="top:41px;width:759px;height:34px"><span class="c" style="left:5px;top:4px">28.01.14 15:29:28</span><span class="c" style="left:125px;top:4px;width:241px">Action "Group Discover"<br>Description: "Group "Temp""</span><span class="c" style="left:373px;top:4px">found nothing at</span><span class="c" style="left:513px;top:4px;width:242px">IP-Address "192.168.255.37"</span></div><div class="row" style="top:75px;width:759px;height:34px"><span class="c" style="left:5px;top:4px">28.01.14 15:29:25</span><span class="c" style="left:125px;top:4px;width:241px">Action "Group Discover"<br>Description: "Group "Temp""</span><span class="c" style="left:373px;top:4px">found nothing at</span><span class="c" style="left:513px;top:4px;width:242px">IP-Address "192.168.255.36"</span></div><div class="row" style="top:109px;width:759px;height:34px"><span class="c" style="left:5px;top:4px">28.01.14 15:29:20</span><span class="c" style="left:125px;top:4px;width:241px"><i class="n">Client "mac-08002709FDE3", MAC: "08:00:27:0…</i><br>IP-Address: "192.168.255.35", Config: "config_…</span><span class="c" style="left:373px;top:4px">registered at</span><span class="c" style="left:513px;top:4px;width:242px">Group "Temp"<br>Description: "Shared Group"</span></div><div class="row" style="top:143px;width:759px;height:34px"><span class="c" style="left:5px;top:4px">28.01.14 15:29:20</span><span class="c" style="left:125px;top:4px;width:241px"><i class="n">Client "mac-08002709FDE3", MAC: "08:00:27:0…</i><br>IP-Address: "192.168.255.35", Config: "config_…</span><span class="c" style="left:373px;top:4px">added to</span><span class="c" style="left:513px;top:4px;width:242px">Group "Temp"<br>Description: "Shared Group"</span></div><div class="row" style="top:177px;width:759px;height:34px"><span class="c" style="left:5px;top:4px">28.01.14 15:29:17</span><span class="c" style="left:125px;top:4px;width:241px">Action "Group Discover"<br>Description: "Group "Temp""</span><span class="c" style="left:373px;top:4px">found new</span><span class="c" style="left:513px;top:4px;width:242px"><i class="n">Client "mac-08002709FDE3", MAC: "08:00:27:0…</i><br>IP-Address: "192.168.255.35", Config: "config_…</span></div><div class="row" style="top:211px;width:759px;height:34px"><span class="c" style="left:5px;top:4px">28.01.14 15:29:16</span><span class="c" style="left:125px;top:4px;width:241px"><i class="n">Client "mac-080027E42FBF", MAC: "08:00:27:E…</i><br>IP-Address: "192.168.255.34", Config: "config_…</span><span class="c" style="left:373px;top:4px">registered at</span><span class="c" style="left:513px;top:4px;width:242px">Group "Temp"<br>Description: "Shared Group"</span></div><div class="row" style="top:245px;width:759px;height:34px"><span class="c" style="left:5px;top:4px">28.01.14 15:29:16</span><span class="c" style="left:125px;top:4px;width:241px"><i class="n">Client "mac-080027E42FBF", MAC: "08:00:27:E…</i><br>IP-Address: "192.168.255.34", Config: "config_…</span><span class="c" style="left:373px;top:4px">added to</span><span class="c" style="left:513px;top:4px;width:242px">Group "Temp"<br>Description: "Shared Group"</span></div><div class="row" style="top:279px;width:759px;height:34px"><span class="c" style="left:5px;top:4px">28.01.14 15:29:13</span><span class="c" style="left:125px;top:4px;width:241px">Action "Group Discover"<br>Description: "Group "Temp""</span><span class="c" style="left:373px;top:4px">found new</span><span class="c" style="left:513px;top:4px;width:242px"><i class="n">Client "mac-080027E42FBF", MAC: "08:00:27:E…</i><br>IP-Address: "192.168.255.34", Config: "config_…</span></div><div class="row" style="top:313px;width:759px;height:34px"><span class="c" style="left:5px;top:4px">28.01.14 15:29:10</span><span class="c" style="left:125px;top:4px;width:241px">Action "Group Discover"<br>Description: "Group "Temp""</span><span class="c" style="left:373px;top:4px">found nothing at</span><span class="c" style="left:513px;top:4px;width:242px">IP-Address "192.168.255.33"</span></div></div>
  <div class="abs gh" style="top:410px;height:24px" id="rgh2">
    <div class="hc s" style="left:1px;width:120px">Zeit<svg class="sa" style="margin-left:4px" width="7" height="4" shape-rendering="crispEdges"><path d="M0 0h7v1H0zM1 1h5v1H1zM2 2h3v1H2zM3 3h1v1H3z" fill="#5b8bd6"/></svg></div>
    <div class="hc" style="left:121px;width:248px">Auslöser</div>
    <div class="hc" style="left:369px;width:140px">Ereignis</div>
    <div class="hc" style="left:509px;width:249px">Context</div>
  </div>
  <div class="abs" id="sb" style="left:759px;top:434px;width:16px;height:315px;background:#d6d2cf"><svg class="abs" style="left:3px;top:3px" width="10" height="7"><path d="M1 5.500l4-4 4 4" fill="none" stroke="#222" stroke-width="1.600"/></svg><div class="abs" style="left:1px;top:13px;width:13px;height:278px;border-radius:4px;background:linear-gradient(90deg,#a79e9b,#b3aba8 40%,#aea5a2);box-shadow:0 0 0 1px #e4e1de"></div><div class="abs" style="left:2px;top:40px;width:11px;height:106px;border-radius:3px;background:linear-gradient(90deg,#ebe8e5,#d6d2cf);border:1px solid #9a928f;box-shadow:inset 0 0 0 1px #f2f0ee"></div><svg class="abs" style="left:3px;top:293px" width="10" height="7"><path d="M1 5.500l4-4 4 4" fill="none" stroke="#222" stroke-width="1.600"/></svg><svg class="abs" style="left:3px;top:306px" width="10" height="7"><path d="M1 1.500l4 4 4-4" fill="none" stroke="#222" stroke-width="1.600"/></svg></div>
</div>
</body>
</html>
